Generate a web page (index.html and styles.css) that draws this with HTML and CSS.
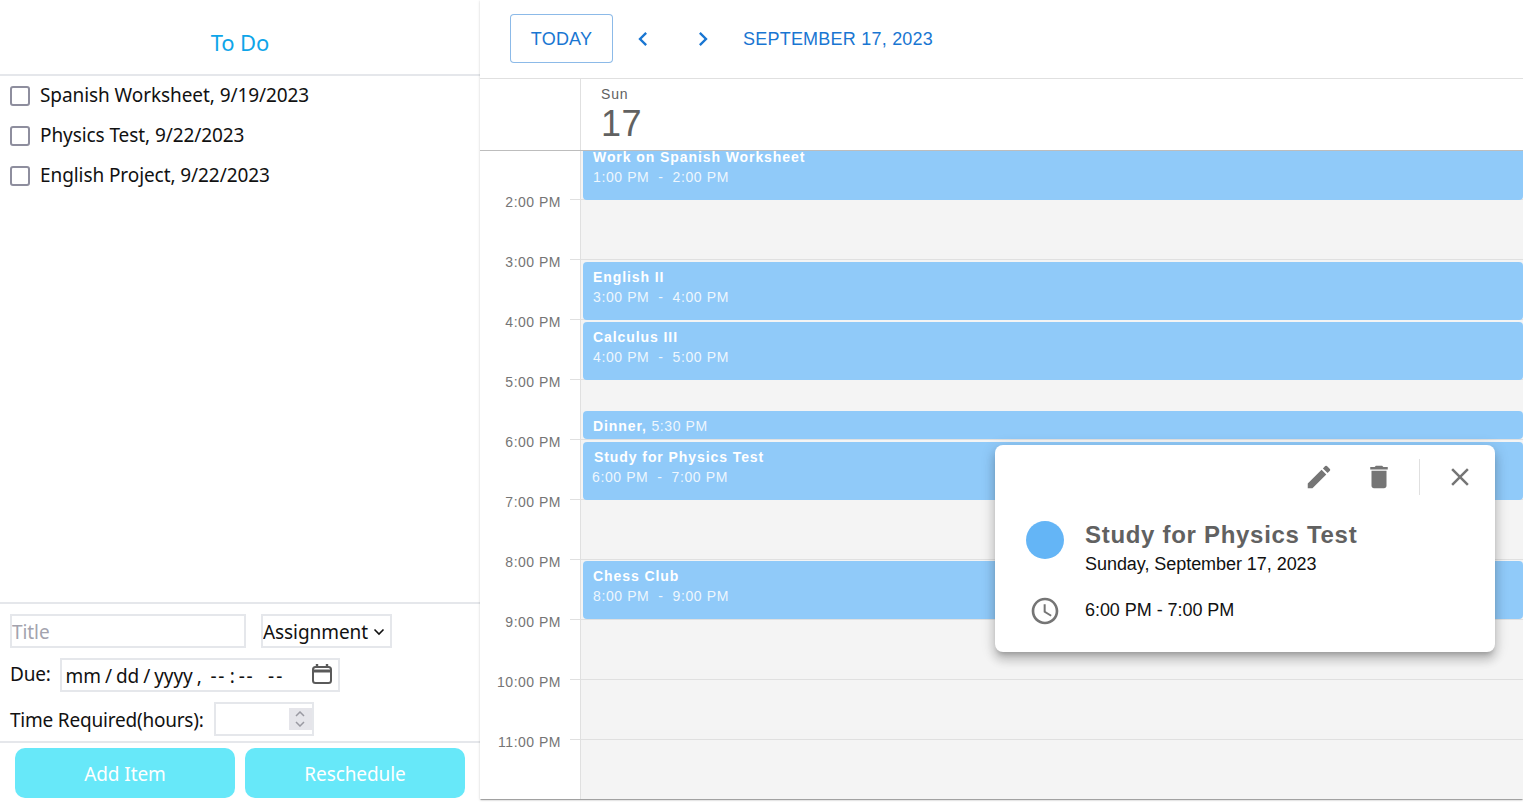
FILE: index.html
```html
<!DOCTYPE html>
<html lang="en">
<head>
    <meta charset="UTF-8">
    <meta name="viewport" content="width=device-width, initial-scale=1.0">
    <title>To Do Scheduler</title>
    <link rel="stylesheet" href="styles.css">
</head>
<body>
    <div class="app">
        <aside class="todo">
            <h1 class="todo-title">To Do</h1>
            <ul class="todo-list">
                <li class="todo-item"><input type="checkbox" class="todo-check"><span class="todo-text">Spanish Worksheet, 9/19/2023</span></li>
                <li class="todo-item"><input type="checkbox" class="todo-check"><span class="todo-text">Physics Test, 9/22/2023</span></li>
                <li class="todo-item"><input type="checkbox" class="todo-check"><span class="todo-text">English Project, 9/22/2023</span></li>
            </ul>
            <form class="todo-form">
                <div class="form-row form-row-first">
                    <input type="text" class="field field-title" placeholder="Title">
                    <label class="field-wrap">
                        <select class="field field-type">
                            <option>Assignment</option>
                            <option>Test</option>
                            <option>Project</option>
                        </select>
                        <svg class="select-arrow" viewBox="0 0 12 8"><path d="M1.5 1.5 6 6l4.5-4.5" fill="none" stroke="#111" stroke-width="1.6"/></svg>
                    </label>
                </div>
                <div class="form-row form-row-due">
                    <label for="due" class="row-label">Due:</label>
                    <div class="field-wrap">
                        <input type="datetime-local" id="due" class="field field-due">
                        <svg class="date-icon" viewBox="0 0 20 20"><path d="M5 0v3M15 0v3" stroke="#5a5a5a" stroke-width="2.4" fill="none"/><rect x="1" y="3" width="18" height="16" rx="2.5" fill="none" stroke="#5a5a5a" stroke-width="2"/><path d="M1 7h18" stroke="#5a5a5a" stroke-width="3"/></svg>
                    </div>
                </div>
                <div class="form-row form-row-hours">
                    <label for="hours" class="row-label">Time Required(hours):</label>
                    <div class="field-wrap">
                        <input type="number" id="hours" class="field field-hours">
                        <span class="spinner">
                            <svg class="spin-arrow" viewBox="0 0 10 6"><path d="M1 5l4-4 4 4" fill="none" stroke="#9a9aa2" stroke-width="1.5"/></svg>
                            <svg class="spin-arrow" viewBox="0 0 10 6"><path d="M1 1l4 4 4-4" fill="none" stroke="#9a9aa2" stroke-width="1.5"/></svg>
                        </span>
                    </div>
                </div>
            </form>
            <div class="todo-actions">
                <button type="button" class="action">Add Item</button>
                <button type="button" class="action">Reschedule</button>
            </div>
        </aside>

        <main class="calendar">
            <div class="toolbar">
                <button type="button" class="today">TODAY</button>
                <svg class="nav-icon" viewBox="0 0 24 24"><path d="M15.41 7.41 14 6l-6 6 6 6 1.41-1.41L10.83 12z"/></svg>
                <svg class="nav-icon" viewBox="0 0 24 24"><path d="M10 6 8.59 7.41 13.17 12l-4.58 4.59L10 18l6-6z"/></svg>
                <span class="toolbar-date">SEPTEMBER 17, 2023</span>
            </div>

            <div class="day-head">
                <div class="day-head-gutter"></div>
                <div class="day-head-cell">
                    <div class="day-name">Sun</div>
                    <div class="day-num">17</div>
                </div>
            </div>

            <div class="timetable">
                <div class="times">
                    <div class="time-row time-row-short"><span class="time-label">2:00 PM</span><span class="tick"></span></div>
                    <div class="time-row"><span class="time-label">3:00 PM</span><span class="tick"></span></div>
                    <div class="time-row"><span class="time-label">4:00 PM</span><span class="tick"></span></div>
                    <div class="time-row"><span class="time-label">5:00 PM</span><span class="tick"></span></div>
                    <div class="time-row"><span class="time-label">6:00 PM</span><span class="tick"></span></div>
                    <div class="time-row"><span class="time-label">7:00 PM</span><span class="tick"></span></div>
                    <div class="time-row"><span class="time-label">8:00 PM</span><span class="tick"></span></div>
                    <div class="time-row"><span class="time-label">9:00 PM</span><span class="tick"></span></div>
                    <div class="time-row"><span class="time-label">10:00 PM</span><span class="tick"></span></div>
                    <div class="time-row"><span class="time-label">11:00 PM</span><span class="tick"></span></div>
                </div>
                <div class="day-col">
                    <div class="slot slot-short"></div>
                    <div class="slot"></div>
                    <div class="slot"></div>
                    <div class="slot"></div>
                    <div class="slot"></div>
                    <div class="slot"></div>
                    <div class="slot"></div>
                    <div class="slot"></div>
                    <div class="slot"></div>
                    <div class="slot"></div>

                    <div class="event ev-spanish">
                        <div class="ev-title">Work on Spanish Worksheet</div>
                        <div class="ev-time">1:00 PM &nbsp;-&nbsp; 2:00 PM</div>
                    </div>
                    <div class="event ev-english">
                        <div class="ev-title">English II</div>
                        <div class="ev-time">3:00 PM &nbsp;-&nbsp; 4:00 PM</div>
                    </div>
                    <div class="event ev-calculus">
                        <div class="ev-title">Calculus III</div>
                        <div class="ev-time">4:00 PM &nbsp;-&nbsp; 5:00 PM</div>
                    </div>
                    <div class="event ev-dinner">
                        <div class="ev-line"><b class="ev-name">Dinner,</b> <span class="ev-time">5:30 PM</span></div>
                    </div>
                    <div class="event ev-study">
                        <div class="ev-title">Study for Physics Test</div>
                        <div class="ev-time">6:00 PM &nbsp;-&nbsp; 7:00 PM</div>
                    </div>
                    <div class="event ev-chess">
                        <div class="ev-title">Chess Club</div>
                        <div class="ev-time">8:00 PM &nbsp;-&nbsp; 9:00 PM</div>
                    </div>
                </div>
            </div>

            <div class="popover">
                <div class="pop-actions">
                    <svg class="pop-icon" viewBox="0 0 24 24"><path d="M3 17.25V21h3.75L17.81 9.94l-3.75-3.75L3 17.25zM20.71 7.04c.39-.39.39-1.02 0-1.41l-2.34-2.34a.9959.9959 0 0 0-1.41 0l-1.83 1.83 3.75 3.75 1.83-1.83z"/></svg>
                    <svg class="pop-icon" viewBox="0 0 24 24"><path d="M6 19c0 1.1.9 2 2 2h8c1.1 0 2-.9 2-2V7H6v12zM19 4h-3.5l-1-1h-5l-1 1H5v2h14V4z"/></svg>
                    <span class="pop-divider"></span>
                    <svg class="pop-icon" viewBox="0 0 24 24"><path d="M19 6.41 17.59 5 12 10.59 6.41 5 5 6.41 10.59 12 5 17.59 6.41 19 12 13.41 17.59 19 19 17.59 13.41 12z"/></svg>
                </div>
                <div class="pop-main">
                    <span class="pop-dot"></span>
                    <div>
                        <div class="pop-title">Study for Physics Test</div>
                        <div class="pop-text">Sunday, September 17, 2023</div>
                    </div>
                </div>
                <div class="pop-when">
                    <svg class="clock" viewBox="0 0 24 24"><path d="M11.99 2C6.47 2 2 6.48 2 12s4.47 10 9.99 10C17.52 22 22 17.52 22 12S17.52 2 11.99 2zM12 20c-4.42 0-8-3.58-8-8s3.58-8 8-8 8 3.58 8 8-3.58 8-8 8zm.5-13H11v6l5.25 3.15.75-1.23-4.5-2.67z"/></svg>
                    <div class="pop-text">6:00 PM - 7:00 PM</div>
                </div>
            </div>
        </main>
    </div>
</body>
</html>
```

FILE: styles.css
```css
* {
    box-sizing: border-box;
}
html, body {
    margin: 0;
    height: 100%;
    overflow: hidden;
    background: #fff;
}
.app {
    display: flex;
    height: 800px;
}

/* left side */
.todo {
    width: 480px;
    flex: none;
    display: flex;
    flex-direction: column;
    font-family: "Noto Sans", sans-serif;
    font-size: 19px;
    letter-spacing: -.08px;
    color: #111;
}
.todo-title {
    height: 76px;
    margin: 0;
    padding-top: 26px;
    border-bottom: 2px solid #e5e7eb;
    text-align: center;
    font-size: 22px;
    line-height: 32px;
    font-weight: 400;
    color: #0ea5e9;
}
.todo-list {
    flex: 1;
    margin: 0;
    padding: 0;
    list-style: none;
}
.todo-item {
    height: 40px;
    padding-left: 10px;
    display: flex;
    align-items: center;
    gap: 10px;
}
.todo-text {
    margin-top: -2px;
}
.todo-check {
    appearance: none;
    width: 20px;
    height: 20px;
    margin: 0;
    border: 2px solid #8e8e9e;
    border-radius: 3px;
    background: #fff;
}
.todo-form {
    height: 141px;
    border-top: 2px solid #e5e7eb;
    border-bottom: 2px solid #e5e7eb;
    padding: 10px 10px 0;
}
.form-row {
    display: flex;
    align-items: center;
    gap: 10px;
    height: 34px;
    margin-bottom: 10px;
}
.form-row-first {
    gap: 15px;
}
.row-label {
    letter-spacing: -.21px;
}
.form-row-due {
    gap: 9px;
}
.form-row-due .row-label {
    margin-top: -3px;
}
.form-row-hours .row-label {
    margin-top: 2px;
}
.field {
    display: block;
    height: 34px;
    border: 2px solid #e5e7eb;
    border-radius: 0;
    background: #fff;
    font: inherit;
    letter-spacing: inherit;
    color: #111;
    padding: 2px 0 0;
    outline: none;
}
.field-wrap {
    position: relative;
    display: block;
}
.field-title {
    width: 236px;
}
.field-title::placeholder {
    color: #a3a3ae;
}
.field-type {
    appearance: none;
    width: 131px;
}
.select-arrow {
    position: absolute;
    right: 7px;
    top: 14px;
    width: 12px;
    height: 8px;
}
.field-due {
    width: 280px;
    padding-left: 3px;
}
.field-due::-webkit-datetime-edit-text {
    padding: 0 3px;
}
.field-due::-webkit-datetime-edit-hour-field,
.field-due::-webkit-datetime-edit-minute-field {
    letter-spacing: 1.5px;
}
.field-due::-webkit-datetime-edit-ampm-field {
    padding-left: 4px;
    letter-spacing: 2px;
}
.field-due::-webkit-calendar-picker-indicator {
    opacity: 0;
}
.date-icon {
    position: absolute;
    left: 252px;
    top: 6px;
    width: 20px;
    height: 20px;
}
.field-hours {
    width: 100px;
}
.field-hours::-webkit-inner-spin-button {
    display: none;
}
.spinner {
    position: absolute;
    left: 75px;
    top: 6px;
    width: 23px;
    height: 22px;
    background: #e5e5ea;
    display: flex;
    flex-direction: column;
    align-items: center;
    justify-content: center;
    gap: 4px;
}
.spin-arrow {
    width: 10px;
    height: 6px;
}
.todo-actions {
    height: 57px;
    padding: 5px 15px 0;
    display: flex;
    gap: 10px;
}
.action {
    width: 220px;
    height: 50px;
    padding-top: 2px;
    border: none;
    border-radius: 10px;
    background: #67e8f9;
    color: #fff;
    font: inherit;
    letter-spacing: inherit;
}

/* calendar */
.calendar {
    flex: 1;
    height: 799px;
    position: relative;
    display: flex;
    flex-direction: column;
    min-width: 0;
    font-family: "Liberation Sans", Arial, sans-serif;
    background: #fff;
    box-shadow: 0 2px 1px -1px rgba(0, 0, 0, .2), 0 1px 1px 0 rgba(0, 0, 0, .14), 0 1px 3px 0 rgba(0, 0, 0, .12);
}
.toolbar {
    height: 79px;
    flex: none;
    display: flex;
    align-items: center;
    padding: 0 0 1px 30px;
    border-bottom: 1px solid #e0e0e0;
    color: #1976d2;
}
.today {
    width: 103px;
    height: 49px;
    margin-right: 16px;
    padding: 2px 0 0;
    border: 1px solid rgba(25, 118, 210, .5);
    border-radius: 4px;
    background: #fff;
    color: #1976d2;
    font-family: inherit;
    font-size: 18px;
    letter-spacing: .2px;
}
.nav-icon {
    width: 28px;
    height: 28px;
    margin-right: 32px;
    fill: #1976d2;
}
.toolbar-date {
    margin: 2px 0 0 -6px;
    font-size: 18px;
    letter-spacing: .22px;
}
.day-head {
    height: 72px;
    flex: none;
    display: flex;
    border-bottom: 1px solid #bdbdbd;
}
.day-head-gutter {
    width: 101px;
    border-right: 1px solid #e0e0e0;
}
.day-head-cell {
    flex: 1;
    padding: 6px 0 0 20px;
    color: #616161;
}
.day-name {
    font-size: 14px;
    line-height: 18px;
    letter-spacing: .8px;
}
.day-num {
    font-size: 36px;
    line-height: 42px;
    letter-spacing: .5px;
}
.timetable {
    flex: 1;
    display: flex;
    min-height: 0;
}
.times {
    width: 101px;
    flex: none;
    border-right: 1px solid #e0e0e0;
}
.time-row {
    height: 60px;
    display: flex;
    align-items: flex-end;
    justify-content: flex-end;
}
.time-row-short {
    height: 49px;
}
.time-label {
    margin: 0 9px -10px 0;
    font-size: 14px;
    line-height: 16px;
    letter-spacing: .5px;
    color: #757575;
}
.tick {
    width: 10px;
    border-bottom: 1px solid #e0e0e0;
}
.day-col {
    flex: 1;
    position: relative;
    overflow: hidden;
    background: #f4f4f4;
}
.slot {
    height: 60px;
    border-bottom: 1px solid #e0e0e0;
}
.slot-short {
    height: 49px;
}

/* events sit on the time axis */
.event {
    position: absolute;
    left: 2px;
    right: 0;
    height: 58px;
    padding: 5px 10px 0;
    border-radius: 4px;
    background: #90caf9;
    color: #fff;
    font-size: 14px;
    line-height: 20px;
    letter-spacing: .6px;
}
.ev-title, .ev-name {
    font-weight: 700;
    letter-spacing: .92px;
}
.ev-time {
    opacity: .85;
}
.ev-spanish {
    top: -9px;
}
.ev-english {
    top: 111px;
}
.ev-calculus {
    top: 171px;
}
.ev-dinner {
    top: 260px;
    height: 28px;
    padding-top: 5px;
}
.ev-study {
    top: 291px;
}
.ev-study .ev-title {
    margin-left: 1px;
}
.ev-study .ev-time {
    margin-left: -1px;
}
.ev-chess {
    top: 410px;
}

/* popover */
.popover {
    position: absolute;
    left: 515px;
    top: 445px;
    width: 500px;
    height: 207px;
    padding: 14px 20px 0 31px;
    border-radius: 8px;
    background: #fff;
    box-shadow: 0 5px 5px -3px rgba(0, 0, 0, .2), 0 8px 10px 1px rgba(0, 0, 0, .14), 0 3px 14px 2px rgba(0, 0, 0, .12);
}
.pop-actions {
    display: flex;
    justify-content: flex-end;
    align-items: center;
    height: 36px;
    gap: 30px;
}
.pop-icon {
    width: 30px;
    height: 30px;
    fill: #757575;
}
.pop-divider {
    width: 1px;
    height: 36px;
    margin: 0 -5px;
    background: #e0e0e0;
}
.pop-main {
    display: flex;
    align-items: flex-start;
    gap: 21px;
    margin-top: 25px;
}
.pop-dot {
    width: 38px;
    height: 38px;
    margin-top: 1px;
    border-radius: 50%;
    background: #64b5f6;
}
.pop-title {
    margin-bottom: 2px;
    font-size: 24px;
    line-height: 30px;
    font-weight: 700;
    letter-spacing: .7px;
    color: #616161;
}
.pop-text {
    font-size: 18px;
    line-height: 24px;
    letter-spacing: -.05px;
    color: #111;
}
.pop-when {
    display: flex;
    align-items: center;
    gap: 24px;
    margin-top: 16px;
}
.clock {
    width: 32px;
    height: 32px;
    margin: 3px 0 0 3px;
    fill: #757575;
}
```
